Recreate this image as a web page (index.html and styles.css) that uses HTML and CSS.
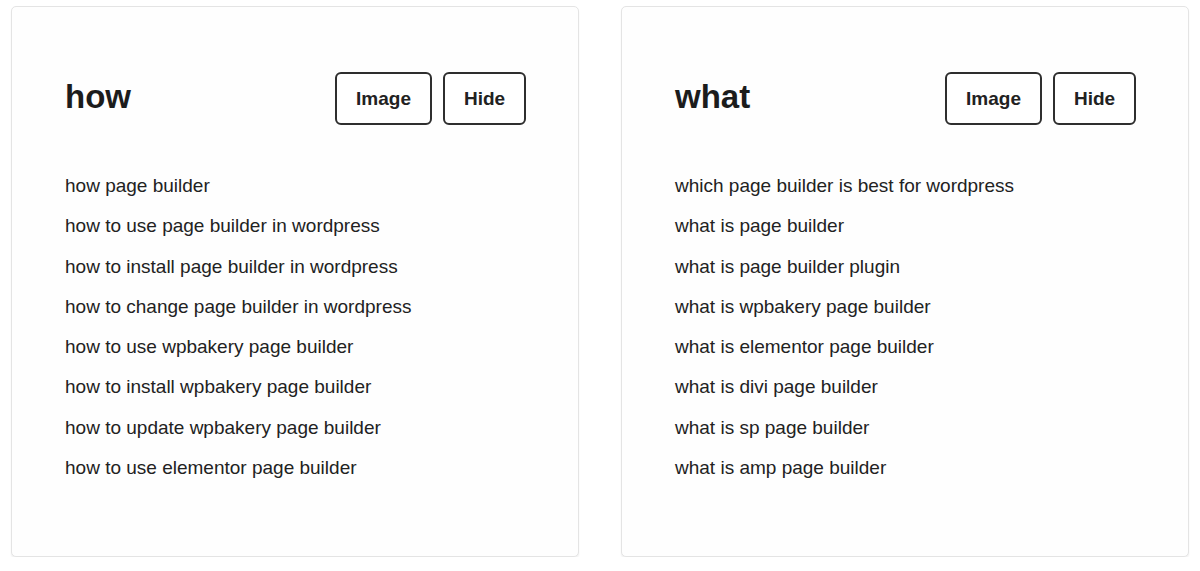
FILE: index.html
```html
<!DOCTYPE html>
<html>
<head>
<meta charset="utf-8">
<link rel="stylesheet" href="styles.css">
</head>
<body>
<div class="page">
  <section class="card">
    <div class="card-head">
      <h2 class="title">how</h2>
      <div class="actions">
        <button class="btn btn-image">Image</button>
        <button class="btn btn-hide">Hide</button>
      </div>
    </div>
    <ul class="list">
      <li>how page builder</li>
      <li>how to use page builder in wordpress</li>
      <li>how to install page builder in wordpress</li>
      <li>how to change page builder in wordpress</li>
      <li>how to use wpbakery page builder</li>
      <li>how to install wpbakery page builder</li>
      <li>how to update wpbakery page builder</li>
      <li>how to use elementor page builder</li>
    </ul>
  </section>
  <section class="card">
    <div class="card-head">
      <h2 class="title">what</h2>
      <div class="actions">
        <button class="btn btn-image">Image</button>
        <button class="btn btn-hide">Hide</button>
      </div>
    </div>
    <ul class="list">
      <li>which page builder is best for wordpress</li>
      <li>what is page builder</li>
      <li>what is page builder plugin</li>
      <li>what is wpbakery page builder</li>
      <li>what is elementor page builder</li>
      <li>what is divi page builder</li>
      <li>what is sp page builder</li>
      <li>what is amp page builder</li>
    </ul>
  </section>
</div>
</body>
</html>
```

FILE: styles.css
```css
* { box-sizing: border-box; }
html, body {
  margin: 0;
  padding: 0;
  background: #ffffff;
}
body {
  font-family: "Liberation Sans", Arial, Helvetica, sans-serif;
  color: #222222;
}
.page {
  display: flex;
  gap: 42px;
  padding: 6px 11px 0 11px;
}
.card {
  width: 568px;
  height: 551px;
  background: #fefefe;
  border: 1px solid #e4e4e4;
  border-radius: 5px;
  box-shadow: 0 2px 2px rgba(0,0,0,0.06);
  padding: 65px 52px 0 53px;
}
.card-head {
  display: flex;
  align-items: center;
  justify-content: space-between;
  height: 53px;
}
.title {
  margin: -5px 0 0 0;
  font-size: 33px;
  line-height: 1;
  font-weight: 700;
  color: #1c1c1c;
}
.actions {
  display: flex;
  gap: 11px;
}
.btn {
  height: 53px;
  background: #ffffff;
  border: 2px solid #2e2e2e;
  border-radius: 6px;
  font-family: "Liberation Sans", Arial, Helvetica, sans-serif;
  font-weight: 700;
  font-size: 19px;
  color: #222222;
  padding: 0;
}
.btn-image { width: 97px; }
.btn-hide { width: 83px; }
.list {
  list-style: none;
  margin: 41px 0 0 0;
  padding: 0;
}
.list li {
  font-size: 19px;
  line-height: 40.3px;
  height: 40.3px;
  color: #222222;
  white-space: nowrap;
}
```
